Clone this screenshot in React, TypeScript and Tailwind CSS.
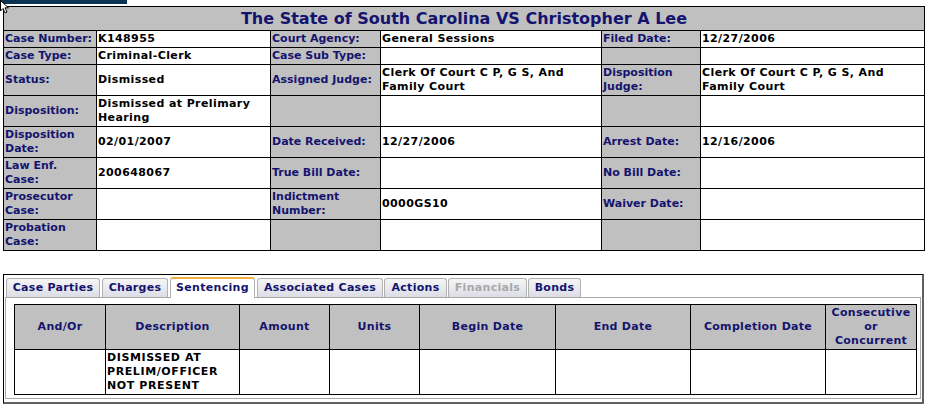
import React from "react";

const L = "bg-[#c0c0c0] text-[#14146e] border border-black px-px py-px align-middle leading-[14px] whitespace-nowrap overflow-hidden";
const V = "bg-white text-black border border-black px-px py-px align-middle leading-[14px] tracking-[0.4px] whitespace-nowrap overflow-hidden";

type Row = [string, string, string, string, string, string];

const rows: Row[] = [
  ["Case Number:", "K148955", "Court Agency:", "General Sessions", "Filed Date:", "12/27/2006"],
  ["Case Type:", "Criminal-Clerk", "Case Sub Type:", "", "", ""],
  ["Status:", "Dismissed", "Assigned Judge:", "Clerk Of Court C P, G S, And\nFamily Court", "Disposition\nJudge:", "Clerk Of Court C P, G S, And\nFamily Court"],
  ["Disposition:", "Dismissed at Prelimary\nHearing", "", "", "", ""],
  ["Disposition\nDate:", "02/01/2007", "Date Received:", "12/27/2006", "Arrest Date:", "12/16/2006"],
  ["Law Enf.\nCase:", "200648067", "True Bill Date:", "", "No Bill Date:", ""],
  ["Prosecutor\nCase:", "", "Indictment\nNumber:", "0000GS10", "Waiver Date:", ""],
  ["Probation\nCase:", "", "", "", "", ""],
];

function Lines({ s }: { s: string }) {
  const parts = s.split("\n");
  return (
    <>
      {parts.map((p, i) => (
        <React.Fragment key={i}>
          {i > 0 && <br />}
          {p}
        </React.Fragment>
      ))}
    </>
  );
}

const tabs = [
  { t: "Case Parties", c: "ml-[1px] w-[94px]" },
  { t: "Charges", c: "ml-[2px] w-[66px]" },
  { t: "Sentencing", c: "ml-[2px] w-[85px]", active: true },
  { t: "Associated Cases", c: "ml-[2px] w-[126px]" },
  { t: "Actions", c: "ml-[1px] w-[63px]" },
  { t: "Financials", c: "ml-[1px] w-[79px]", disabled: true },
  { t: "Bonds", c: "ml-[1px] w-[53px]" },
];

const heads = ["And/Or", "Description", "Amount", "Units", "Begin Date", "End Date", "Completion Date", "Consecutive\nor\nConcurrent"];
const widths = [91, 134, 90, 90, 136, 135, 135, 91];

export default function App() {
  return (
    <div className="relative w-[927px] h-[411px] bg-white overflow-hidden font-['DejaVu_Sans',sans-serif] font-bold text-[11px]">
      <div className="h-[4px] w-[127px] bg-[#0c3452]" />
      <svg className="absolute left-0 top-0" width="10" height="14" viewBox="0 0 10 14">
        <path d="M0.5 0.5 L0.5 11 L3 8.5 L5 13 L7 12 L5 7.8 L8.5 7.8 Z" fill="white" stroke="black" strokeWidth="1" />
      </svg>
      <table className="ml-[3px] mt-[2px] w-[921px] table-fixed border-collapse">
        <colgroup>
          <col className="w-[93px]" />
          <col className="w-[174px]" />
          <col className="w-[110px]" />
          <col className="w-[221px]" />
          <col className="w-[99px]" />
          <col className="w-[224px]" />
        </colgroup>
        <tbody>
          <tr>
            <td colSpan={6} className="bg-[#c0c0c0] border border-black text-center text-[#14146e] text-[16px] leading-[21px] py-px">
              The State of South Carolina VS Christopher A Lee
            </td>
          </tr>
          {rows.map((r, i) => (
            <tr key={i}>
              <td className={L}><Lines s={r[0]} /></td>
              <td className={V}><Lines s={r[1]} /></td>
              <td className={L}><Lines s={r[2]} /></td>
              <td className={V}><Lines s={r[3]} /></td>
              <td className={L}><Lines s={r[4]} /></td>
              <td className={V}><Lines s={r[5]} /></td>
            </tr>
          ))}
        </tbody>
      </table>

      <div className="ml-[3px] mt-[23px] w-[921px] h-[130px] border-t border-l border-black border-r-2 border-b-2 border-r-[#606060] border-b-[#606060] flex flex-col">
        <div className="flex items-end pl-[1px] h-[22px]">
          {tabs.map((tb) => (
            <div
              key={tb.t}
              className={
                tb.c +
                " " +
                (tb.active
                  ? "h-[21px] flex items-center justify-center rounded-t-[3px] border border-b-0 border-[#b0b0b0] border-t-2 border-t-[#f0b040] bg-white text-[#14146e] relative z-10 -mb-px tracking-[0.3px]"
                  : tb.disabled
                  ? "h-[19px] flex items-center justify-center rounded-t-[3px] border border-b-0 border-[#b0b0b0] bg-gradient-to-b from-[#f6f6f6] to-[#dcdce6] text-[#a8a8a8] tracking-[0.3px]"
                  : "h-[19px] flex items-center justify-center rounded-t-[3px] border border-b-0 border-[#b0b0b0] bg-gradient-to-b from-[#f6f6f6] to-[#dcdce6] text-[#14146e] tracking-[0.3px]")
              }
            >
              {tb.t}
            </div>
          ))}
        </div>
        <div className="flex-1 mx-px mb-[3px] border border-[#a8a8a8] pt-[6px] pl-[8px]">
          <table className="w-[902px] table-fixed border-collapse">
            <colgroup>
              {widths.map((w, i) => (
                <col key={i} style={{ width: w }} />
              ))}
            </colgroup>
            <tbody>
              <tr>
                {heads.map((h) => (
                  <td key={h} className="bg-[#c0c0c0] text-[#14146e] border border-black text-center align-middle leading-[14px] py-px px-px tracking-[0.3px] whitespace-nowrap">
                    <Lines s={h} />
                  </td>
                ))}
              </tr>
              <tr>
                {heads.map((h, i) => (
                  <td key={h} className="bg-white text-black border border-black align-middle leading-[14px] py-px px-px tracking-[0.6px] whitespace-nowrap">
                    {i === 1 ? <Lines s={"DISMISSED AT\nPRELIM/OFFICER\nNOT PRESENT"} /> : null}
                  </td>
                ))}
              </tr>
            </tbody>
          </table>
        </div>
      </div>
    </div>
  );
}
